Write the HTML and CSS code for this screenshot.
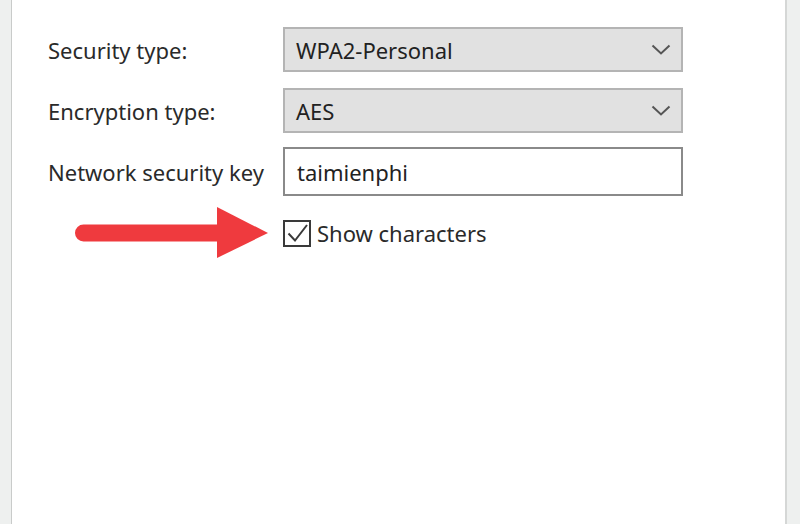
FILE: index.html
```html
<!DOCTYPE html>
<html>
<head>
<meta charset="utf-8">
<link rel="stylesheet" href="styles.css">
</head>
<body>
<div class="panel">
  <div class="form">
    <div class="row row-select">
      <label class="label">Security type:</label>
      <div class="select"><span class="value">WPA2-Personal</span>
        <svg class="chev" width="20" height="11" viewBox="0 0 20 11"><path d="M1.5 1.5 L10 9.5 L18.5 1.5" fill="none" stroke="#555" stroke-width="2"/></svg>
      </div>
    </div>
    <div class="row row-select">
      <label class="label">Encryption type:</label>
      <div class="select"><span class="value">AES</span>
        <svg class="chev" width="20" height="11" viewBox="0 0 20 11"><path d="M1.5 1.5 L10 9.5 L18.5 1.5" fill="none" stroke="#555" stroke-width="2"/></svg>
      </div>
    </div>
    <div class="row row-input">
      <label class="label">Network security key</label>
      <div class="input"><span class="value">taimienphi</span></div>
    </div>
    <div class="row row-check">
      <div class="check-wrap">
        <svg class="arrow" width="200" height="52" viewBox="0 0 200 52"><line x1="10.5" y1="26" x2="150" y2="26" stroke="#ef3a3e" stroke-width="17" stroke-linecap="round"/><polygon points="144,0 195,26 144,51" fill="#ef3a3e"/></svg>
        <span class="box"><svg width="28" height="27" viewBox="0 0 28 27"><rect x="1" y="1" width="26" height="25" fill="#fff" stroke="#3a3a3a" stroke-width="2"/><path d="M5.5 13.5 L12 20.5 L24 5" fill="none" stroke="#3a3a3a" stroke-width="2"/></svg></span>
        <span class="check-label">Show characters</span>
      </div>
    </div>
  </div>
</div>
</body>
</html>
```
FILE: styles.css
```css
html, body {
  margin: 0;
  padding: 0;
  height: 100%;
}
body {
  background: #eef0ef;
  font-family: "Noto Sans", "Open Sans", sans-serif;
  color: #2a2a2a;
  overflow: hidden;
}
.panel {
  margin-left: 11px;
  width: 776px;
  height: 100%;
  background: #fff;
  border-left: 1px solid #c9cbca;
  border-right: 2px solid #d5d7d6;
  box-sizing: border-box;
}
.form {
  padding: 27px 0 0 36px;
  display: flex;
  flex-direction: column;
}
.row {
  display: flex;
  align-items: center;
}
.label {
  width: 235px;
  font-size: 22px;
  color: #2a2a2a;
}
.row-select { height: 45px; margin-bottom: 16px; }
.row-select + .row-select { margin-bottom: 14px; }
.select {
  width: 400px;
  height: 45px;
  box-sizing: border-box;
  background: #e1e1e1;
  border: 2px solid #b4b4b4;
  display: flex;
  align-items: center;
  justify-content: space-between;
  padding: 0 10px 0 11px;
}
.value {
  font-size: 22px;
  color: #222;
}
.chev { display: block; }
.input {
  width: 400px;
  height: 49px;
  box-sizing: border-box;
  border: 2px solid #8a8a8a;
  background: #fff;
  display: flex;
  align-items: center;
  padding: 0 12px;
}
.row-check {
  margin-top: 24px;
  padding-left: 235px;
}
.check-wrap {
  position: relative;
  display: flex;
  align-items: center;
  height: 27px;
}
.arrow {
  position: absolute;
  left: -210px;
  top: -13px;
}
.box { display: block; height: 27px; }
.box svg { display: block; }
.check-label {
  margin-left: 6px;
  font-size: 22px;
  line-height: 27px;
  color: #2a2a2a;
}
```
